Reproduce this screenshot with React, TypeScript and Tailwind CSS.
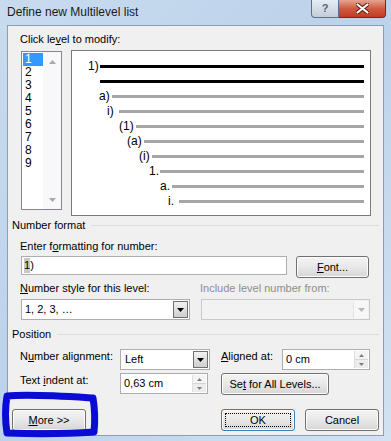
import React from "react";

const levels = [
  { sp: "w-[16px]", tw: "w-[12px]", t: "1)", black: true },
  { sp: "w-[28px]", tw: "w-0", t: "", black: true },
  { sp: "w-[27px]", tw: "w-[13px]", t: "a)", black: false },
  { sp: "w-[35px]", tw: "w-[12px]", t: "i)", black: false },
  { sp: "w-[47px]", tw: "w-[17px]", t: "(1)", black: false },
  { sp: "w-[55px]", tw: "w-[17px]", t: "(a)", black: false },
  { sp: "w-[67px]", tw: "w-[13px]", t: "(i)", black: false },
  { sp: "w-[77px]", tw: "w-[11px]", t: "1.", black: false },
  { sp: "w-[88px]", tw: "w-[12px]", t: "a.", black: false },
  { sp: "w-[96px]", tw: "w-[11px]", t: "i.", black: false },
];

function DropBtn({ disabled }: { disabled?: boolean }) {
  return (
    <div
      className={
        disabled
          ? "flex h-full w-[15px] items-center justify-center border-l border-[#e3e3e3] bg-[#f7f7f7]"
          : "flex h-full w-[15px] items-center justify-center border border-[#707070] bg-gradient-to-b from-[#f2f2f2] to-[#cfcfcf]"
      }
    >
      <svg width="7" height="4" viewBox="0 0 7 4">
        <path d="M0 0H7L3.5 4Z" fill={disabled ? "#b8b8b8" : "#000"} />
      </svg>
    </div>
  );
}

function Spin() {
  return (
    <div className="flex h-full w-[14px] flex-col border-l border-[#e0e0e0]">
      <div className="flex flex-1 items-center justify-center border-b border-[#d6d6d6] bg-[#f4f4f4]">
        <svg width="5" height="3" viewBox="0 0 5 3">
          <path d="M0 3H5L2.5 0Z" fill="#7d7d7d" />
        </svg>
      </div>
      <div className="flex flex-1 items-center justify-center bg-[#ececec]">
        <svg width="5" height="3" viewBox="0 0 5 3">
          <path d="M0 0H5L2.5 3Z" fill="#7d7d7d" />
        </svg>
      </div>
    </div>
  );
}

function Btn({ children, w, def }: { children: React.ReactNode; w: string; def?: boolean }) {
  return (
    <div
      className={
        (def ? "border-[#3c7fb1] " : "border-[#707070] ") +
        w +
        " relative flex h-[22px] items-center justify-center whitespace-nowrap rounded-[3px] border bg-gradient-to-b from-[#f4f4f4] via-[#e8e8e8] to-[#d6d6d6] leading-[15px] shadow-[inset_0_0_0_1px_#fcfcfc]"
      }
    >
      {def && <div className="absolute inset-[3px] border border-dotted border-black" />}
      <span className="relative">{children}</span>
    </div>
  );
}

export default function App() {
  return (
    <div className="relative h-[441px] w-[391px] overflow-hidden whitespace-nowrap bg-gradient-to-br from-[#c8dbef] via-[#bcd2ea] to-[#d2e2f2] font-['Liberation_Sans',Arial,sans-serif] text-[11px] text-black">
      {/* Title bar */}
      <div className="flex h-[25px] items-start">
        <div className="pl-[7px] pt-[5px] text-[12px] leading-[15px] text-[#1a1a1a]">Define new Multilevel list</div>
        <div className="ml-auto mr-[5px] flex">
          <div className="flex h-[18px] w-[28px] items-center justify-center rounded-bl-[4px] border border-t-0 border-[#5f6f84] bg-gradient-to-b from-[#e6edf5] to-[#c3cdd9] text-[11px] font-bold leading-none text-[#54637a]">
            ?
          </div>
          <div className="flex h-[18px] w-[47px] items-center justify-center rounded-br-[4px] border border-l-0 border-t-0 border-[#6e2a20] bg-gradient-to-b from-[#e5a492] via-[#cf5a42] to-[#c23a22]">
            <svg width="13" height="11" viewBox="0 0 13 11">
              <path
                d="M1.5 1.5L11.5 9.5M11.5 1.5L1.5 9.5"
                stroke="#5a1a10"
                strokeWidth="4"
                strokeLinecap="round"
              />
              <path
                d="M1.5 1.5L11.5 9.5M11.5 1.5L1.5 9.5"
                stroke="#ffffff"
                strokeWidth="2.2"
                strokeLinecap="round"
              />
            </svg>
          </div>
        </div>
      </div>

      {/* Client area */}
      <div className="ml-[7px] h-[411px] w-[377px] border border-[#8e9db0] bg-[#f0f0f0]">
        <div className="h-[21px] pl-[12px] pt-[6px] leading-[15px]">
          Click le<u>v</u>el to modify:
        </div>

        <div className="mt-[3px] flex items-start pl-[13px]">
          {/* level list */}
          <div className="mt-[1px] flex h-[159px] w-[41px] border border-[#828790] bg-white">
            <div className="w-[21px] pt-[1px]">
              {[1, 2, 3, 4, 5, 6, 7, 8, 9].map((n) => (
                <div
                  key={n}
                  className={
                    n === 1
                      ? "ml-[1px] h-[13px] w-[20px] bg-[#3399ff] pl-[2px] text-[12px] leading-[13px] text-white"
                      : "ml-[1px] h-[13px] pl-[2px] text-[12px] leading-[13px]"
                  }
                >
                  {n}
                </div>
              ))}
            </div>
            <div className="flex w-[18px] flex-col items-center justify-between bg-[#f8f8f8] pb-[7px] pt-[8px]">
              <svg width="7" height="4" viewBox="0 0 7 4">
                <path d="M0 4H7L3.5 0Z" fill="#a8a8a8" />
              </svg>
              <svg width="7" height="4" viewBox="0 0 7 4">
                <path d="M0 0H7L3.5 4Z" fill="#a8a8a8" />
              </svg>
            </div>
          </div>

          {/* preview */}
          <div className="ml-[9px] h-[166px] w-[300px] border border-[#7a7a7a] bg-white pt-[8px] text-[12px]">
            {levels.map((l, i) => (
              <div key={i} className="flex h-[15px] items-center pr-[6px]">
                <div className={l.sp + " shrink-0"} />
                <div className={l.tw + " shrink-0 leading-[15px]"}>{l.t}</div>
                <div className={(l.black ? "bg-black" : "bg-[#a6a6a6]") + " h-[3px] flex-1"} />
              </div>
            ))}
          </div>
        </div>

        {/* Number format */}
        <div className="mt-[2px] flex h-[15px] items-center pl-[4px] pr-[4px]">
          <span className="leading-[15px]">Number format</span>
          <div className="ml-[6px] h-px flex-1 bg-[#dcdcdc]" />
        </div>
        <div className="mt-[6px] h-[15px] pl-[12px] leading-[15px]">
          Enter f<u>o</u>rmatting for number:
        </div>
        <div className="mt-[2px] flex items-start pl-[13px]">
          <div className="flex h-[19px] w-[266px] items-center border border-[#abadb3] bg-white pl-[2px] leading-[15px]">
            <span className="bg-[#c8c8c8]">1</span>
            <span>)</span>
          </div>
          <div className="ml-[9px]">
            <Btn w="w-[73px]">
              <u>F</u>ont...
            </Btn>
          </div>
        </div>

        <div className="mt-[3px] flex h-[15px] pl-[12px] leading-[15px]">
          <div className="w-[180px]">
            <u>N</u>umber style for this level:
          </div>
          <div className="text-[#8d8d8d]">Include level number from:</div>
        </div>
        <div className="mt-[3px] flex pl-[13px]">
          <div className="flex h-[21px] w-[169px] items-center border border-[#abadb3] bg-white p-[1px]">
            <span className="flex-1 pl-[2px] leading-[15px]">1, 2, 3, …</span>
            <DropBtn />
          </div>
          <div className="ml-[11px] flex h-[21px] w-[169px] items-center border border-[#c9c9c9] bg-[#f2f2f2] p-[1px]">
            <span className="flex-1" />
            <DropBtn disabled />
          </div>
        </div>

        {/* Position */}
        <div className="mt-[7px] flex h-[15px] items-center pl-[4px] pr-[4px]">
          <span className="leading-[15px]">Position</span>
          <div className="ml-[6px] h-px flex-1 bg-[#dcdcdc]" />
        </div>
        <div className="mt-[7px] flex items-start pl-[12px]">
          <div className="w-[100px] leading-[15px]">
            N<u>u</u>mber alignment:
          </div>
          <div className="flex h-[21px] w-[90px] items-center border border-[#abadb3] bg-white p-[1px]">
            <span className="flex-1 pl-[3px] leading-[15px]">Left</span>
            <DropBtn />
          </div>
          <div className="ml-[11px] w-[61px] leading-[15px]">
            <u>A</u>ligned at:
          </div>
          <div className="flex h-[21px] w-[88px] items-center border border-[#abadb3] bg-white p-[1px]">
            <span className="flex-1 pl-[2px] leading-[15px]">0 cm</span>
            <Spin />
          </div>
        </div>
        <div className="mt-[3px] flex items-start pl-[12px]">
          <div className="w-[100px] leading-[15px]">
            Text <u>i</u>ndent at:
          </div>
          <div className="flex h-[21px] w-[88px] items-center border border-[#abadb3] bg-white p-[1px]">
            <span className="flex-1 pl-[2px] leading-[15px]">0,63 cm</span>
            <Spin />
          </div>
          <div className="ml-[13px]">
            <Btn w="w-[108px]">
              Se<u>t</u> for All Levels...
            </Btn>
          </div>
        </div>

        <div className="mt-[14px] flex pl-[4px]">
          <Btn w="w-[74px]">
            <u>M</u>ore &gt;&gt;
          </Btn>
          <div className="ml-[135px]">
            <Btn w="w-[74px]" def>
              OK
            </Btn>
          </div>
          <div className="ml-[10px]">
            <Btn w="w-[74px]">Cancel</Btn>
          </div>
        </div>
      </div>

      {/* hand-drawn blue annotation */}
      <svg className="absolute left-0 top-[390px]" width="100" height="51" viewBox="0 0 100 51">
        <path
          d="M7 6 C30 4 60 6 93 8 C95 20 95 32 94 42 C65 44 35 44 7 43 C5 30 5 18 7 6 Z"
          fill="none"
          stroke="#0b0bd6"
          strokeWidth="7"
          strokeLinejoin="round"
        />
      </svg>
    </div>
  );
}
